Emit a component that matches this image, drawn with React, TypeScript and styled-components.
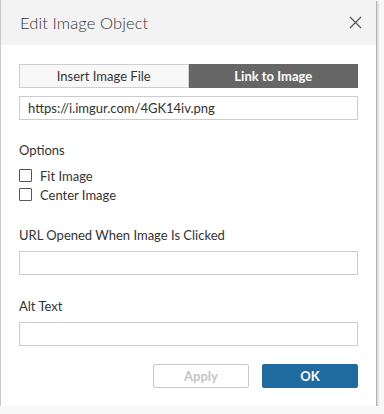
import {FC} from 'react'
import styled, {createGlobalStyle} from 'styled-components'

const GlobalStyle = createGlobalStyle`
  html, body {
    margin: 0;
    padding: 0;
    background: #f8f8f8;
  }
  body {
    font-family: Lato, 'Open Sans', sans-serif;
    color: #333;
  }
`

const Dialog = styled.div`
  width: 376px;
  height: 406px;
  box-sizing: border-box;
  background: #fff;
  border-left: 1px solid #c8c8c8;
  box-shadow: 1px 1px 0 #b4b4b4, 2px 2px 2px rgba(0, 0, 0, 0.2);
  display: flex;
  flex-direction: column;
`
const Header = styled.div`
  height: 45px;
  flex: none;
  background: #f3f3f3;
  display: flex;
  align-items: center;
  justify-content: space-between;
  padding: 0 13px 0 19px;
`
const Title = styled.div`
  font-size: 16.5px;
  font-weight: 300;
  color: #333;
  letter-spacing: 0.1px;
`
const CloseButton = styled.button`
  border: none;
  background: none;
  padding: 0;
  width: 14px;
  height: 14px;
  display: flex;
  cursor: pointer;
`
const Body = styled.div`
  flex: 1;
  padding: 19px 18px 0 18px;
  display: flex;
  flex-direction: column;
`
const Tabs = styled.div`
  display: flex;
  height: 24px;
  margin-bottom: 8px;
`
const Tab = styled.div<{$active?: boolean}>`
  flex: 1;
  box-sizing: border-box;
  display: flex;
  align-items: center;
  justify-content: center;
  font-size: 13px;
  font-weight: ${p => (p.$active ? 700 : 400)};
  color: ${p => (p.$active ? '#fff' : '#333')};
  background: ${p => (p.$active ? '#666' : '#f8f8f8')};
  border: 1px solid ${p => (p.$active ? '#666' : '#cfcfcf')};
`
const TextInput = styled.div`
  height: 24px;
  box-sizing: border-box;
  border: 1px solid #cccccc;
  display: flex;
  align-items: center;
  padding: 0 8px;
  font-size: 13px;
  color: #333;
`
const SectionLabel = styled.div<{$first?: boolean}>`
  margin-top: ${p => (p.$first ? 22 : 23)}px;
  margin-bottom: 8px;
  font-size: 13px;
  color: #333;
`
const CheckRow = styled.label`
  display: flex;
  align-items: center;
  gap: 8px;
  height: 19px;
  font-size: 13px;
  color: #333;
`
const CheckBox = styled.span`
  width: 13px;
  height: 13px;
  box-sizing: border-box;
  border: 1px solid #555;
  border-radius: 1px;
  background: #fff;
`
const Footer = styled.div`
  display: flex;
  justify-content: flex-end;
  gap: 13px;
  margin-top: 18px;
`
const Button = styled.button<{$primary?: boolean}>`
  width: 96px;
  height: 24px;
  box-sizing: border-box;
  font-family: inherit;
  font-size: 13px;
  font-weight: 700;
  border-radius: 2px;
  border: 1px solid ${p => (p.$primary ? '#1f6a9e' : '#c8c8c8')};
  background: ${p => (p.$primary ? '#1f6a9e' : '#fff')};
  color: ${p => (p.$primary ? '#fff' : '#c4c4c4')};
`

const CloseIcon: FC = () => (
  <svg width="13" height="13" viewBox="0 0 13 13">
    <path d="M1 1 L12 12 M12 1 L1 12" stroke="#555" strokeWidth="1.2" fill="none" />
  </svg>
)

export default function App() {
  return (
    <>
      <GlobalStyle />
      <Dialog>
        <Header>
          <Title>Edit Image Object</Title>
          <CloseButton aria-label="Close">
            <CloseIcon />
          </CloseButton>
        </Header>
        <Body>
          <Tabs>
            <Tab>Insert Image File</Tab>
            <Tab $active>Link to Image</Tab>
          </Tabs>
          <TextInput>https://i.imgur.com/4GK14iv.png</TextInput>
          <SectionLabel $first>Options</SectionLabel>
          <CheckRow>
            <CheckBox />
            Fit Image
          </CheckRow>
          <CheckRow>
            <CheckBox />
            Center Image
          </CheckRow>
          <SectionLabel>URL Opened When Image Is Clicked</SectionLabel>
          <TextInput />
          <SectionLabel>Alt Text</SectionLabel>
          <TextInput />
          <Footer>
            <Button>Apply</Button>
            <Button $primary>OK</Button>
          </Footer>
        </Body>
      </Dialog>
    </>
  )
}
